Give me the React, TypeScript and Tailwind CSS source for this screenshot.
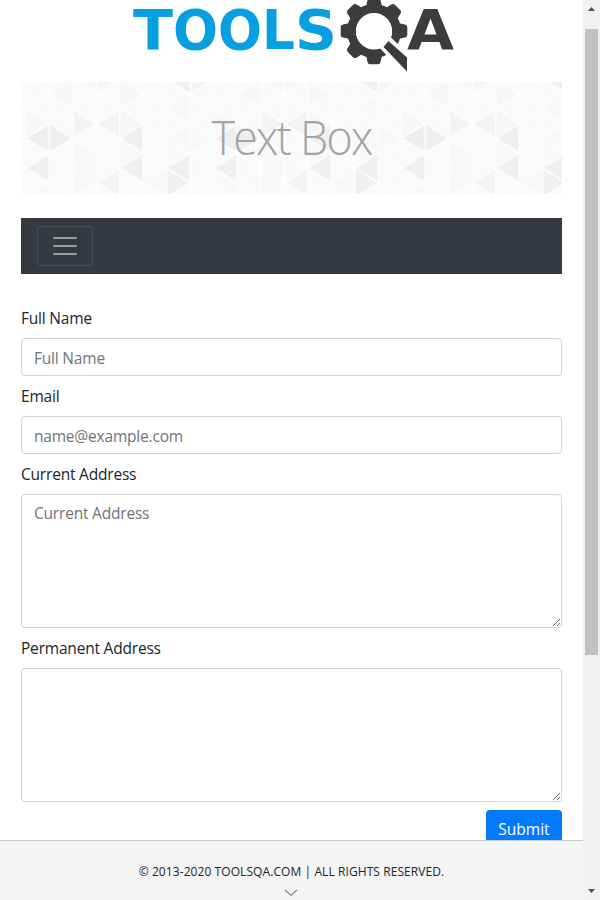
import React from "react";

const SANS = "font-['Open_Sans','Noto_Sans',sans-serif]";

function Logo() {
  return (
    <svg className="block h-[72px] w-[330px] shrink-0" viewBox="130 0 330 72" role="img" aria-label="TOOLSQA">
      <g fontFamily="'DejaVu Sans', sans-serif" fontWeight="700" fontSize="56">
        <text y="49" fill="#069fdf">
          <tspan x="133" textLength="40" lengthAdjust="spacingAndGlyphs">T</tspan>
          <tspan x="173" textLength="45" lengthAdjust="spacingAndGlyphs">O</tspan>
          <tspan x="218" textLength="44" lengthAdjust="spacingAndGlyphs">O</tspan>
          <tspan x="262" textLength="33" lengthAdjust="spacingAndGlyphs">L</tspan>
          <tspan x="295" textLength="42" lengthAdjust="spacingAndGlyphs">S</tspan>
        </text>
        <text x="407" y="49" fill="#3c3c3e" textLength="47" lengthAdjust="spacingAndGlyphs">A</text>
      </g>
      <g fill="#3c3c3e">
        <circle cx="374" cy="31" r="22.5" fill="none" stroke="#3c3c3e" strokeWidth="9" />
        {[0, 45, 90, 180, 225, 270, 315].map((a) => (
          <path key={a} d="M366 7 L367.500 0 Q368 -2.300 370 -2.300 H378 Q380 -2.300 380.500 0 L382 7Z" transform={`rotate(${a} 374 31)`} />
        ))}
        <circle cx="374" cy="31.500" r="18" fill="#fff" />
        <path d="M378 46 L389.500 36 L411 57 V82Z" fill="#fff" />
        <path d="M388.500 41 L407 57.500 V71.500 L383.500 47Z" />
      </g>
    </svg>
  );
}

// Each facet is [direction, apex column, apex half-row, colour].
const FACETS: [string, number, number, string][] = [
  ["L", 0, 3, "#eeeeee"], ["R", 2, 3, "#eeeeee"], ["L", 0, 5, "#f0f0f0"],
  ["R", 3, 2, "#f3f3f3"], ["L", 3, 2, "#f3f3f3"], ["L", 4, 3, "#f0f0f0"],
  ["L", 4, 5, "#f0f0f0"], ["L", 3, 6, "#f3f3f3"], ["L", 6, 5, "#efefef"],
  ["R", 7, 6, "#f0f0f0"], ["L", 6, -1, "#f0f0f0"], ["R", 8, -1, "#f5f5f5"],
  ["L", 2, -1, "#f7f7f7"], ["R", 4, -1, "#f6f6f6"], ["L", 1, 0, "#f7f7f7"],
  ["R", 5, 0, "#f7f7f7"], ["R", 1, 2, "#f7f7f7"], ["R", 5, 2, "#f6f6f6"],
  ["L", 6, 1, "#f8f8f8"], ["L", 2, 5, "#f8f8f8"], ["R", 3, 4, "#f8f8f8"],
  ["R", 5, 4, "#f8f8f8"], ["L", 6, 3, "#f8f8f8"], ["R", 3, 6, "#f8f8f8"],
  ["L", 0, 7, "#f7f7f7"], ["R", 8, 3, "#f8f8f8"], ["L", 5, 6, "#f8f8f8"],
];
const COL = 23.5;
const ROW = 14.8;
const ny = (h: number) => 12 + ROW * h;

function Backdrop() {
  return (
    <svg className="absolute inset-0 h-full w-full" aria-hidden="true">
      <defs>
        <pattern id="facets" width="188" height="112" x="4.7" y="0" patternUnits="userSpaceOnUse">
          <rect width="188" height="112" fill="#fafafa" />
          {FACETS.map(([d, c, h, fill], i) => {
            const side = d === "L" ? c + 1 : c - 1;
            return <polygon key={i} fill={fill} points={`${c * COL},${ny(h)} ${side * COL},${ny(h - 1)} ${side * COL},${ny(h + 1)}`} />;
          })}
          <g stroke="#fdfdfd" strokeWidth="1.8">
            {[0, 1, 2, 3, 4, 5, 6, 7, 8].map((c) => <line key={c} x1={c * COL} x2={c * COL} y1="0" y2="112" />)}
            {[-9, -7, -5, -3, -1, 1, 3, 5, 7].map((h) => (
              <g key={h}>
                <line x1="0" y1={ny(h)} x2="188" y2={ny(h + 8)} />
                <line x1="0" y1={ny(h + 8)} x2="188" y2={ny(h)} />
              </g>
            ))}
          </g>
        </pattern>
      </defs>
      <rect width="100%" height="100%" fill="url(#facets)" />
    </svg>
  );
}

function Field({ label, placeholder, area }: { label: string; placeholder?: string; area?: boolean }) {
  const box = "block w-full rounded border border-[#ced4da] bg-white px-3 text-[15.5px] leading-6 tracking-[-0.2px] text-[#495057] placeholder:text-[#6c757d] placeholder:opacity-100 outline-none";
  return (
    <label className="block">
      <span className="mb-2 block text-[15.5px] leading-6 tracking-[-0.2px] text-[#212529]">{label}</span>
      {area ? (
        <textarea className={`${box} h-[134px] resize py-1.5`} placeholder={placeholder} />
      ) : (
        <input className={`${box} h-[38px] pt-[7px] pb-[5px]`} placeholder={placeholder} />
      )}
    </label>
  );
}

export default function App() {
  return (
    <div className={`flex h-[900px] w-[600px] overflow-hidden bg-white ${SANS}`}>
      <div className="flex w-[583px] shrink-0 flex-col">
        <main className="h-[840px] overflow-hidden px-[21px]">
          <header className="flex h-[82px] pl-[109px]">
            <Logo />
          </header>
          <div className="relative h-28 overflow-hidden">
            <Backdrop />
            <h1 className="relative scale-x-[0.95] pt-[26px] text-center text-[47px] leading-[58px] font-light tracking-[-1.7px] text-[#a3a3a3]">Text Box</h1>
          </div>
          <nav className="mt-6 flex h-14 items-center bg-[#343a40] px-4">
            <button className="flex h-10 w-14 items-center justify-center rounded border border-white/10" aria-label="Menu">
              <svg className="h-[30px] w-[30px]" viewBox="0 0 30 30" stroke="#fff" strokeOpacity="0.5" strokeWidth="2" strokeLinecap="round">
                <path d="M4 7h22M4 15h22M4 23h22" />
              </svg>
            </button>
          </nav>
          <form className="flex flex-col gap-2 pt-8">
            <Field label="Full Name" placeholder="Full Name" />
            <Field label="Email" placeholder="name@example.com" />
            <Field label="Current Address" placeholder="Current Address" area />
            <Field label="Permanent Address" area />
            <button type="button" className="h-[38px] w-[76px] self-end rounded bg-[#007bff] text-[15.5px] leading-6 text-white">Submit</button>
          </form>
        </main>
        <footer className="flex h-[60px] flex-col items-center border-t border-[#c8c8c8] bg-[#f4f4f4] pt-[22px] text-[#212529]">
          <span className="text-[12px] leading-[18px] tracking-[0.08px] whitespace-nowrap">© 2013-2020 TOOLSQA.COM | ALL RIGHTS RESERVED.</span>
          <svg className="mt-[8px] mr-[2px] h-2 w-[14px]" viewBox="0 0 14 8" fill="none" stroke="#888" strokeWidth="1.2">
            <path d="M1 1l6 5.500L13 1" />
          </svg>
        </footer>
      </div>
      <div className="flex w-[17px] flex-col items-center bg-[#f1f1f1]">
        <svg className="h-[29px] w-[17px] shrink-0" viewBox="0 0 17 29"><path d="M5 11h7L8.500 7z" fill="#505050" /></svg>
        <div className="mr-px h-[626px] w-[13px] bg-[#c1c1c1]" />
        <svg className="mt-auto h-[17px] w-[17px] shrink-0" viewBox="0 0 17 17"><path d="M5 6h7L8.500 10z" fill="#505050" /></svg>
      </div>
    </div>
  );
}
